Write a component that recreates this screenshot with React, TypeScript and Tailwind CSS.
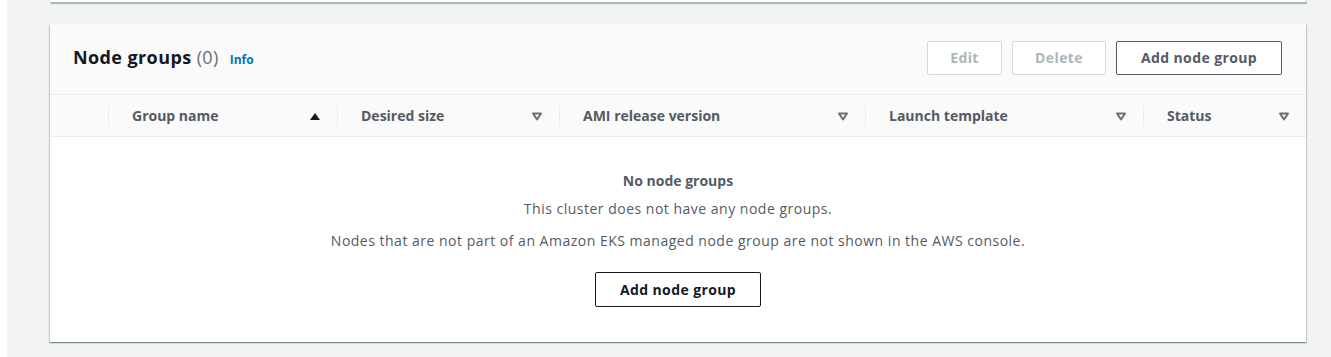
import { useState } from 'react';

type Column = { key: string; label: string; width: string; sorted?: boolean };

const columns: Column[] = [
  { key: 'name', label: 'Group name', width: 'w-[229px]', sorted: true },
  { key: 'size', label: 'Desired size', width: 'w-[222px]' },
  { key: 'ami', label: 'AMI release version', width: 'w-[306px]' },
  { key: 'template', label: 'Launch template', width: 'w-[278px]' },
  { key: 'status', label: 'Status', width: 'flex-1' },
];

function SortIcon({ active }: { active?: boolean }) {
  if (active) {
    return (
      <svg width="12" height="12" viewBox="0 0 12 12" aria-hidden="true">
        <path d="M1 10 L6 3 L11 10 Z" fill="#16191f" />
      </svg>
    );
  }
  return (
    <svg width="12" height="12" viewBox="0 0 12 12" aria-hidden="true">
      <path d="M2 3.5 L10 3.5 L6 9.5 Z" fill="none" stroke="#687078" strokeWidth="2" strokeLinejoin="round" />
    </svg>
  );
}

export default function App() {
  const [nodeGroups] = useState<string[]>([]);

  return (
    <div className="min-h-[357px] bg-white pl-[7px] font-['Open_Sans',sans-serif]">
      <div className="bg-[#f2f3f3] min-h-[357px] pr-[25px] pl-[43px]">
        {/* previous panel edge */}
        <div className="h-[3px] bg-white border-b border-[#aab7b8] shadow-[1px_1px_1px_rgba(0,28,36,0.3)]" />

        <section className="mt-[21px] bg-white shadow-[0_1px_1px_0_rgba(0,28,36,0.3),1px_1px_1px_0_rgba(0,28,36,0.15),-1px_1px_1px_0_rgba(0,28,36,0.15)]">
          {/* Header */}
          <header className="bg-[#fafafa] h-[71px] flex items-center justify-between pl-[23px] pr-[24px] pb-[4px] border-b border-[#eaeded]">
            <div className="flex items-baseline gap-[11px]">
              <h2 className="text-[18px] font-bold text-[#16191f] tracking-[0.4px]">
                Node groups <span className="font-normal text-[#687078]">(0)</span>
              </h2>
              <a href="#" className="text-[12px] font-bold text-[#0073bb]">Info</a>
            </div>
            <div className="flex items-center gap-[10px] pt-[1px]">
              <button className="h-[34px] w-[75px] border border-[#d5dbdb] rounded-[2px] bg-white text-[14px] font-bold text-[#aab7b8] tracking-[0.4px]">Edit</button>
              <button className="h-[34px] w-[94px] border border-[#d5dbdb] rounded-[2px] bg-white text-[14px] font-bold text-[#aab7b8] tracking-[0.4px]">Delete</button>
              <button className="h-[34px] w-[166px] border border-[#545b64] rounded-[2px] bg-white text-[14px] font-bold text-[#545b64] tracking-[0.4px]">Add node group</button>
            </div>
          </header>

          {/* Table header */}
          <div className="flex h-[42px] bg-[#fafafa] border-b border-[#eaeded]">
            <div className="w-[58px]" />
            {columns.map((col) => (
              <div key={col.key} className={`${col.width} flex items-center`}>
                <div className="w-px h-[22px] bg-[#eaeded]" />
                <div className="flex-1 flex items-center justify-between pl-[23px] pr-[16px]">
                  <span className="text-[14px] font-bold text-[#545b64]">{col.label}</span>
                  <SortIcon active={col.sorted} />
                </div>
              </div>
            ))}
          </div>

          {/* Empty state */}
          {nodeGroups.length === 0 && (
            <div className="flex flex-col items-center pt-[34px] pb-[35px] text-[14px] text-[#545b64] tracking-[0.5px]">
              <p className="font-bold leading-[20px] tracking-normal">No node groups</p>
              <p className="mt-[8px] leading-[20px]">This cluster does not have any node groups.</p>
              <p className="mt-[12px] leading-[20px]">Nodes that are not part of an Amazon EKS managed node group are not shown in the AWS console.</p>
              <button className="mt-[21px] h-[35px] w-[166px] border border-[#16191f] rounded-[2px] bg-white text-[14px] font-bold text-[#16191f] tracking-[0.4px]">
                Add node group
              </button>
            </div>
          )}
        </section>
      </div>
    </div>
  );
}
